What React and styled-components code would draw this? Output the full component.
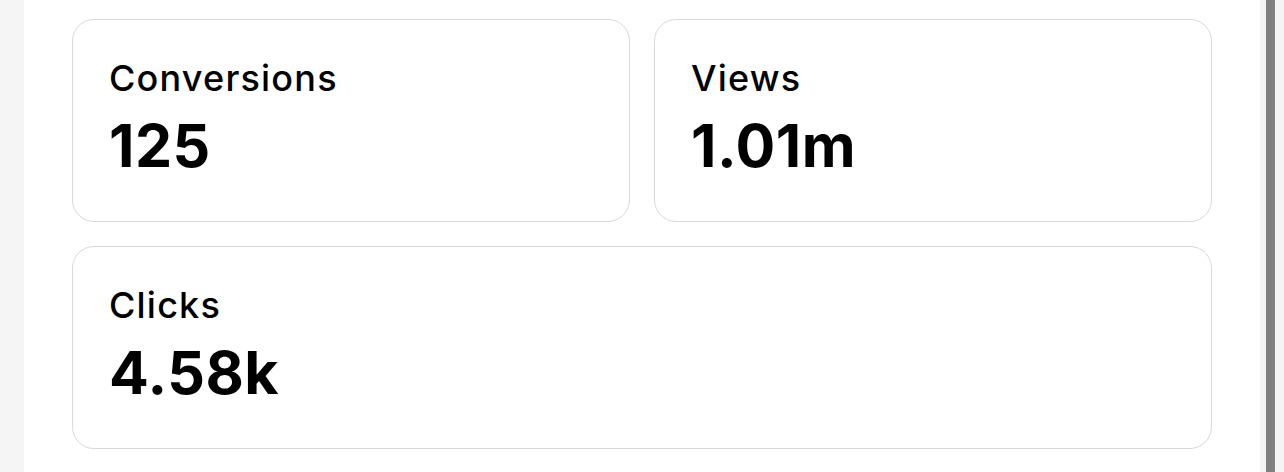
import styled, { createGlobalStyle } from 'styled-components';

const GlobalStyle = createGlobalStyle`
  html, body {
    margin: 0;
    padding: 0;
    background: #f5f5f5;
  }
  body {
    font-family: Inter, "Liberation Sans", Arial, sans-serif;
    color: #000;
  }
`;

const Page = styled.div`
  display: flex;
  width: 1284px;
  height: 472px;
  overflow: hidden;
`;

const Gutter = styled.div`
  width: 24px;
  flex: none;
  background: #f5f5f5;
`;

const Panel = styled.main`
  flex: 1;
  min-width: 0;
  background: #fff;
  padding: 19px 48px 0;
`;

const ScrollTrack = styled.div`
  width: 24px;
  flex: none;
  background: #f5f5f5;
  display: flex;
  align-items: stretch;
`;

const ScrollThumb = styled.div`
  width: 9px;
  height: 472px;
  margin-left: 6px;
  background: #808080;
`;

const Grid = styled.div`
  display: grid;
  grid-template-columns: 1fr 1fr;
  gap: 24px 24px;
`;

const Card = styled.div`
  grid-column: ${(p) => (p.$wide ? '1 / -1' : 'auto')};
  border: 1px solid #d9d9d9;
  border-radius: 22px;
  padding: 36px 36px 0;
  height: 203px;
  box-sizing: border-box;
`;

const Label = styled.div`
  font-size: 36px;
  font-weight: 500;
  line-height: 44px;
  letter-spacing: 1.2px;
`;

const Value = styled.div`
  font-size: 59px;
  font-weight: 700;
  line-height: 66px;
  letter-spacing: 0.5px;
  margin-top: 13px;
`;

const stats = [
  { label: 'Conversions', value: '125' },
  { label: 'Views', value: '1.01m' },
  { label: 'Clicks', value: '4.58k', wide: true },
];

export default function App() {
  return (
    <>
      <GlobalStyle />
      <Page>
        <Gutter />
        <Panel>
          <Grid>
            {stats.map((s) => (
              <Card key={s.label} $wide={s.wide}>
                <Label>{s.label}</Label>
                <Value>{s.value}</Value>
              </Card>
            ))}
          </Grid>
        </Panel>
        <ScrollTrack>
          <ScrollThumb />
        </ScrollTrack>
      </Page>
    </>
  );
}
